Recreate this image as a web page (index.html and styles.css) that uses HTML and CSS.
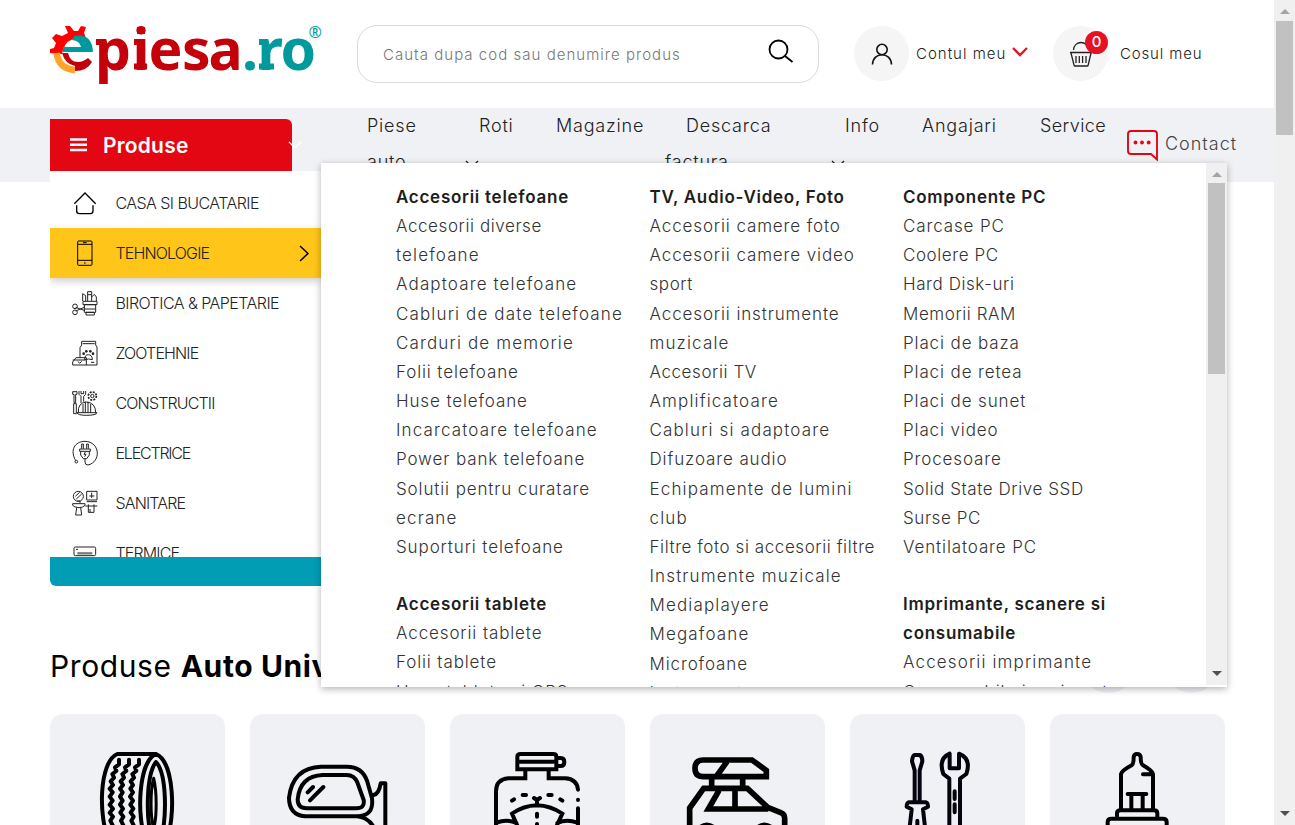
FILE: index.html
```html
<!DOCTYPE html>
<html lang="ro">
<head>
<meta charset="utf-8">
<title>epiesa.ro</title>
<link rel="stylesheet" href="styles.css">
</head>
<body>
<div class="page">
  <header class="header">
    <a class="logo">
      <svg width="276" height="64" viewBox="0 0 276 64">
        <g transform="translate(0 -5)">
        <path d="M0 33 0 29 4 28 6 23 2 18 6 14 12 16 18 13 15 6 20 6 24 11 28 11 31 6 36 7 34 13 36 18 30 19Q17 17 13 30L12 34Z" fill="#f00"/>
        <path d="M24 16Q42 13 43 32H13V27H31Q30 21 22 20Z" fill="#00999c"/>
        <path d="M12 33H18Q20 42 28 42Q33 42 38 38L42 42Q37 51 25 51V46Q15 44 12 33Z" fill="#c2000b"/>
        <path d="M6.500 33Q9 49 25 50" fill="none" stroke="#ffa326" stroke-width="6.500"/>
        </g>
        <g fill="#c4000b"><rect x="46" y="14" width="8" height="6"/><rect x="84" y="14" width="8" height="6"/><rect x="84" y="38.500" width="13" height="6"/><rect x="87" y="2" width="8" height="7"/></g>
        <g fill="#00999c"><rect x="209" y="14" width="8" height="6"/><rect x="209" y="38.500" width="15" height="6"/></g>
        <text class="logo-text" x="45 82.500 98.500 132 158.500" y="44.500" fill="#c4000b">piesa</text>
        <text class="logo-text" x="192 207.500 230.500" y="44.500" fill="#00999c">.ro</text>
        <text class="logo-reg" x="258.500" y="13" fill="#00999c">®</text>
      </svg>
    </a>
    <div class="search">
      <span>Cauta dupa cod sau denumire produs</span>
      <svg width="26" height="26" viewBox="0 0 26 26"><circle cx="10.500" cy="10.500" r="9" fill="none" stroke="#000" stroke-width="1.800"/><path d="M17 17L24.500 23" stroke="#000" stroke-width="1.800"/></svg>
    </div>
    <div class="account">
      <span class="round"><svg width="22" height="22" viewBox="0 0 22 22" fill="none" stroke="#111" stroke-width="1.600"><circle cx="11" cy="6.500" r="5.200"/><path d="M1.500 21.500C2 8.500 20 8.500 20.500 21.500"/></svg></span>
      <span class="account-text">Contul meu</span>
      <svg class="chev-red" width="16" height="10" viewBox="0 0 16 10"><path d="M1 1L8 8L15 1" fill="none" stroke="#e41326" stroke-width="2.300"/></svg>
    </div>
    <div class="cart">
      <span class="round"><svg width="24" height="26" viewBox="0 0 24 26" fill="none" stroke="#222" stroke-width="1.300"><path d="M4.500 9C5 -1 19 -1 19.500 9M1 11.500H23M2 12L5 24Q5.200 25 6 25H18Q19 25 19.200 24L22 12M7 15V22M10.300 15V22M13.600 15V22M17 15V22"/></svg><b class="badge">0</b></span>
      <span class="cart-text">Cosul meu</span>
    </div>
  </header>

  <nav class="nav">
    <div class="produse">
      <svg width="17" height="14" viewBox="0 0 17 14"><path d="M0 1.500H17M0 6.800H17M0 12H17" stroke="#fff" stroke-width="2.400"/></svg>
      <span>Produse</span>
      <svg class="produse-chev" width="14" height="8" viewBox="0 0 14 8"><path d="M1 1L7 7L13 1" fill="none" stroke="#fff" stroke-width="1.200"/></svg>
    </div>
    <div class="links">
      <a>Piese<br>auto</a>
      <a class="pad-a">Roti<svg class="link-chev" width="14" height="8" viewBox="0 0 14 8"><path d="M1 1L7 7L13 1" fill="none" stroke="#222" stroke-width="1.300"/></svg></a>
      <a>Magazine</a>
      <a><span class="pad-b">Descarca</span><br>factura</a>
      <a class="pad-a">Info<svg class="link-chev" width="14" height="8" viewBox="0 0 14 8"><path d="M1 1L7 7L13 1" fill="none" stroke="#222" stroke-width="1.300"/></svg></a>
      <a>Angajari</a>
      <a class="snug">Service</a>
    </div>
    <a class="contact">
      <svg width="31" height="31" viewBox="0 0 31 31"><path d="M4 1H27Q30 1 30 4V29.500L24 24H4Q1 24 1 21V4Q1 1 4 1Z" fill="none" stroke="#e30613" stroke-width="1.900"/><g fill="#e30613"><circle cx="8.500" cy="12.500" r="1.900"/><circle cx="15" cy="12.500" r="1.900"/><circle cx="21.700" cy="12.500" r="1.900"/></g></svg>
      <span>Contact</span>
    </a>
  </nav>

  <main class="content">
    <div class="section-head">
      <h2>Produse <b>Auto Universale</b></h2>
      <div class="arrows"><i></i><i></i></div>
    </div>
    <div class="cards">
      <div class="card"><svg viewBox="30 222 525 333" fill="none" stroke="#000" stroke-width="12" stroke-linecap="round">
        <path d="M348 342H232C176 365 175 535 207 600M348 342C294 365 289 535 318 600M348 342C404 365 407 535 379 600M348 366C319 402 316 535 337 600M348 366C381 402 381 535 362 600"/><path d="M341 415C330 455 331 530 341 565M341 415C351 455 351 530 341 565" stroke-width="9"/>
        <path d="M237 359V373L225 382 229 393 217 402 222 413 212 424 219 435 209 446 218 457 209 470 218 482 209 494 219 506 209 518 219 530 211 542 220 560M267 359V373L255 382 259 393 247 402 252 413 242 424 249 435 240 446 248 457 240 470 248 482 240 494 249 506 241 518 250 530 243 542 252 560M297 359V373L285 382 289 393 277 402 282 413 272 424 279 435 271 446 279 457 270 470 279 482 271 494 280 506 272 518 281 530 274 542 283 560" stroke-linejoin="round" stroke-width="12"/></svg></div>
      <div class="card"><svg viewBox="630 222 525 333" fill="none" stroke="#000" stroke-width="12" stroke-linecap="round" stroke-linejoin="round">
        <path d="M843 380H920Q968 380 982 425L996 475Q1002 529 951 529H795Q747 524 747 473Q758 383 843 380ZM848 405H920Q943 405 952 427L971 480Q975 505 949 505H800Q773 505 773 478Q780 408 848 405ZM803 457L819 441M810 481L850 441M999 466Q1017 463 1022 430H1036V570M951 529Q985 532 1002 563"/></svg></div>
      <div class="card"><svg viewBox="30 222 525 333" fill="none" stroke="#000" stroke-width="12" stroke-linecap="round">
        <path d="M232 388V350Q232 342 242 342H340Q349 342 349 350V388ZM236 365H349M349 354H362Q373 354 373 366Q373 378 362 378H351M256 390V415H205Q168 418 168 455V570M326 390V415H375Q411 417 414 449M414 479V480M414 505V570M291 496Q251 497 216 521L240 575M291 496Q331 497 367 521L342 575M291 496V479M282 474L291 480 300 474M216 482L222 478M248 465H258M325 465H335M361 478L367 482M291 521V530M291 552V570M170 548Q200 536 229 549M352 549Q380 536 412 548"/></svg></div>
      <div class="card"><svg viewBox="630 222 525 333" fill="none" stroke="#000" stroke-width="17">
        <path d="M789 360H936L979 391V410H790Q765 410 765 385Q765 360 789 360ZM861 365L830 408M815 415V442M908 415V442M749 570V504L791 445H922L983 502 1022 518Q1034 522 1034 535V570M837 451L805 507H985M885 447V506"/><path d="M780 562Q800 546 822 562M953 562Q973 546 995 562" stroke-width="13"/></svg></div>
      <div class="card"><svg viewBox="30 222 525 333" fill="none" stroke="#03040e" stroke-width="12" stroke-linecap="round" stroke-linejoin="round">
        <path d="M224 484V391L216 364Q218 345 224 345H240Q247 350 247 364L239 391V484M206 487H258Q264 489 264 500L249 508 256 570M206 487Q200 489 200 500L215 508 208 570M232 542V565M328 570V416L310 402Q294 356 329 341V385H357V341Q395 356 379 402L360 416V570M344 454V477M344 493V517"/></svg></div>
      <div class="card"><svg viewBox="630 222 525 333" fill="none" stroke="#000" stroke-width="12" stroke-linecap="round" stroke-linejoin="round">
        <path d="M843 507V402Q845 392 875 376Q881 372 881 351Q882 342 891 342Q901 342 902 351Q902 372 909 376Q937 392 939 402V507M909 403H933M863 462H919M874 465V507M908 465V507M831 529V520Q831 511 842 511H941Q952 511 952 520V529M803 570V546Q803 536 815 536H968Q980 536 980 546V570"/></svg></div>
    </div>
  </main>

  <aside class="sidebar">
    <ul>
      <li class="loose"><svg viewBox="95 256 78 78" fill="none" stroke="#000" stroke-width="4"><path d="M102 297L134 265L166 297M109 302V319Q109 327 118 327H150Q158 327 158 319V302"/></svg>CASA SI BUCATARIE</li>
      <li class="active"><svg viewBox="95 406 78 78" fill="none" stroke="#000" stroke-width="3"><rect x="112" y="409" width="43" height="73" rx="3"/><path d="M112 419H155M112 467H155M128 414H139M131 475H136" /></svg><span>TEHNOLOGIE</span><svg class="right" width="10" height="17" viewBox="0 0 10 17"><path d="M1 1L9 8.500L1 16" fill="none" stroke="#000" stroke-width="1.500"/></svg></li>
      <li class="loose"><svg viewBox="95 31 78 78" fill="none" stroke="#222" stroke-width="3"><path d="M128 65H170V75H128ZM132 75H166V98H132ZM137 98H162V106H137ZM127 64V42L136 48V64M142 64V36H154V64M154 52L162 44 168 52V64M142 45H153M134 82L106 94M134 93L106 83M133 88H165"/><circle cx="104" cy="80" r="7"/><circle cx="104" cy="98" r="7"/></svg>BIROTICA &amp; PAPETARIE</li>
      <li><svg viewBox="95 181 78 78" fill="none" stroke="#222" stroke-width="3"><path d="M124 185H166V196L170 202V256H97V247L107 234H138V256M124 185V196L119 204V234M127 192H163M97 241H136M113 245L118 251 124 245M152 248H162"/><path d="M133 240Q133 225 144 225Q156 226 156 240L145 238Z"/><g fill="#222" stroke="none"><circle cx="130" cy="222" r="4"/><circle cx="138" cy="215" r="4"/><circle cx="150" cy="215" r="4"/><circle cx="158" cy="222" r="4"/></g></svg>ZOOTEHNIE</li>
      <li><svg viewBox="95 331 78 78" fill="none" stroke="#222" stroke-width="3"><path d="M97 336H110V344H106V369H101V344H97ZM100 372H108V402H100ZM116 334V344L122 350V370M130 350V366M122 334V342H130V334M136 334V344L130 350M114 399Q112 369 138 367Q166 369 166 399M110 399H170Q168 407 138 407Q112 407 110 399M128 373V399M135 366V399M143 366V399M151 373V399"/><circle cx="156" cy="349" r="5"/><circle cx="156" cy="349" r="12" stroke-dasharray="6 3.400" stroke-width="5"/></svg>CONSTRUCTII</li>
      <li class="snug"><svg viewBox="95 481 78 78" fill="none" stroke="#222" stroke-width="3"><path d="M106 543C88 512 103 485 134 485C180 486 183 547 143 556Q134 556 134 547V537M124 507V493H129V507M139 507V493H144V507M118 508H150V515H118ZM121 515V526L129 537H139L147 526V515M135 517L131 524H137L133 531"/><circle cx="108" cy="546" r="4"/></svg>ELECTRICE</li>
      <li><svg viewBox="95 631 78 78" fill="none" stroke="#222" stroke-width="3"><circle cx="114" cy="650" r="15"/><path d="M105 650L118 638M108 658L124 643M139 635H170V661H139ZM154 639V655M147 649H162M139 666H170M97 672H134V677Q128 684 116 684Q101 683 97 677ZM109 684L106 706H124L121 684M110 664H119V671M135 679H171M144 674V698H161V674M149 688V698"/></svg>SANITARE</li>
      <li><svg viewBox="95 781 78 78" fill="none" stroke="#222" stroke-width="3"><rect x="101" y="802" width="65" height="26" rx="4"/><path d="M107 809H113"/><path d="M111 821H156" stroke="#777" stroke-width="7"/></svg>TERMICE</li>
    </ul>
    <div class="side-foot"></div>
  </aside>

  <section class="mega">
    <div class="mega-body">
      <div class="col">
        <h3>Accesorii telefoane</h3>
        <p class="t">Accesorii diverse</p><p class="w">telefoane</p><p class="w">Adaptoare telefoane</p><p class="w">Cabluri de date telefoane</p><p class="w">Carduri de memorie</p><p>Folii telefoane</p><p>Huse telefoane</p><p class="w">Incarcatoare telefoane</p><p>Power bank telefoane</p><p>Solutii pentru curatare</p><p class="w">ecrane</p><p>Suporturi telefoane</p>
        <h3 class="next">Accesorii tablete</h3>
        <p>Accesorii tablete</p><p>Folii tablete</p><p>Huse tablete si GPS</p>
      </div>
      <div class="col">
        <h3>TV, Audio-Video, Foto</h3>
        <p>Accesorii camere foto</p><p>Accesorii camere video</p><p class="t">sport</p><p>Accesorii instrumente</p><p class="w">muzicale</p><p class="t">Accesorii TV</p><p class="w">Amplificatoare</p><p class="w">Cabluri si adaptoare</p><p>Difuzoare audio</p><p class="w">Echipamente de lumini</p><p class="w">club</p><p class="t">Filtre foto si accesorii filtre</p><p class="w">Instrumente muzicale</p><p class="w">Mediaplayere</p><p class="w">Megafoane</p><p>Microfoane</p><p>Instrumente</p>
      </div>
      <div class="col">
        <h3>Componente PC</h3>
        <p>Carcase PC</p><p class="t">Coolere PC</p><p class="t">Hard Disk-uri</p><p class="t">Memorii RAM</p><p>Placi de baza</p><p>Placi de retea</p><p>Placi de sunet</p><p>Placi video</p><p>Procesoare</p><p class="t">Solid State Drive SSD</p><p class="t">Surse PC</p><p>Ventilatoare PC</p>
        <h3 class="next">Imprimante, scanere si<br>consumabile</h3>
        <p class="w">Accesorii imprimante</p><p>Consumabile imprimanta</p>
      </div>
    </div>
    <div class="bar bar-inner"><i class="up"></i><i class="thumb"></i><i class="down"></i></div>
  </section>
</div>
<div class="bar"><i class="up"></i><i class="thumb"></i><i class="down"></i></div>
</body>
</html>
```
FILE: styles.css
```css
* { box-sizing: border-box; }
body { margin: 0; height: 825px; display: flex; overflow: hidden; background: #fff; font-family: Inter, "Open Sans", sans-serif; font-weight: 300; color: #222; }
h2, h3, p, ul { margin: 0; padding: 0; }
svg { flex: none; display: block; }
.page { position: relative; width: 1274px; height: 825px; overflow: hidden; }

.header { height: 108px; padding: 25px 0 0 50px; display: flex; align-items: flex-start; }
.logo { width: 307px; height: 64px; }
.logo svg { overflow: visible; }
.logo-text { font: 700 57px "Noto Sans", sans-serif; }
.logo-reg { font: 400 16px "Noto Sans", sans-serif; }
.search { width: 462px; height: 58px; border: 1px solid #d9d9d9; border-radius: 20px; padding: 0 24px 4px 25px; display: flex; align-items: center; justify-content: space-between; font-size: 15px; letter-spacing: 1.03px; color: #777; }
.search span { padding-top: 4px; }
.account, .cart { display: flex; align-items: center; height: 55px; margin-top: 1px; font-size: 15px; letter-spacing: .85px; white-space: nowrap; }
.account { width: 199px; margin-left: 35px; letter-spacing: 1px; }
.round { position: relative; flex: none; width: 55px; height: 55px; border-radius: 50%; background: #f5f5f5; display: flex; align-items: center; justify-content: center; }
.account-text { width: 96px; margin-left: 7px; }
.chev-red { margin-bottom: 3px; }
.cart-text { margin-left: 12px; }
.badge { position: absolute; left: 32px; top: 5px; width: 23px; height: 23px; border-radius: 50%; background: #e81123; color: #fff; font: 500 15px/22px Inter, sans-serif; letter-spacing: 0; text-align: center; }

.nav { height: 74px; background: #f0f1f5; padding-left: 50px; display: flex; }
.produse { width: 242px; height: 52px; margin-top: 11px; background: #e30613; border-top-right-radius: 6px; display: flex; align-items: center; padding-left: 20px; gap: 16px; color: #fff; font-size: 21px; font-weight: 600; letter-spacing: .2px; position: relative; }
.produse-chev { position: absolute; right: -10px; top: 22px; }
.links { margin-left: 75px; display: grid; grid-template-columns: 98px 91px 109px 166px 91px 118px 87px; font-size: 18px; line-height: 36px; letter-spacing: .8px; height: 74px; overflow: hidden; white-space: nowrap; }
.links .snug { letter-spacing: .4px; }
.pad-a { padding-left: 14px; }
.pad-b { padding-left: 21px; }
.link-chev { margin: 16px 0 0 -14px; }
.contact { display: flex; gap: 7px; padding-top: 22px; font-size: 18px; line-height: 28px; letter-spacing: 1px; color: #444; }

.content { padding-left: 50px; }
.section-head { margin-top: 456px; height: 55px; width: 1169px; display: flex; align-items: center; justify-content: space-between; }
h2 { font-size: 30px; font-weight: 400; letter-spacing: .6px; color: #000; white-space: nowrap; }
h2 b { font-weight: 700; }
.arrows { display: flex; gap: 28px; }
.arrows i { width: 55px; height: 55px; border-radius: 50%; background: #f0f1f5; }
.cards { margin-top: 21px; display: flex; gap: 25px; }
.card { width: 175px; height: 130px; border-radius: 13px; background: #f0f1f5; }
.card svg { width: 175px; height: 111px; }

.sidebar { position: absolute; left: 50px; top: 171px; width: 271px; background: #fff; border-radius: 0 0 0 6px; }
.sidebar ul { height: 386px; padding-top: 7px; overflow: hidden; list-style: none; }
.sidebar li { height: 50px; padding: 0 12px 0 21.5px; display: flex; align-items: center; gap: 18px; font-size: 16px; letter-spacing: -.85px; white-space: nowrap; }
.sidebar li.loose { letter-spacing: -.55px; }
.sidebar li.snug { letter-spacing: -1.2px; }
.sidebar li > svg:first-child { width: 26px; height: 26px; }
.sidebar li.active { background: #ffc519; box-shadow: 0 3px 8px rgba(0,0,0,.2); }
.sidebar .right { margin-left: auto; }
.side-foot { height: 29px; background: #009db5; border-radius: 0 0 0 6px; }

.mega { position: absolute; left: 321px; top: 163px; width: 906px; height: 524px; background: #fff; display: flex; box-shadow: 0 2px 7px rgba(0,0,0,.3); overflow: hidden; }
.mega-body { flex: 1; padding: 20px 0 0 75px; display: grid; grid-template-columns: 253.5px 253.5px 1fr; font-size: 17px; line-height: 29.16px; letter-spacing: .88px; color: #333; white-space: nowrap; }
.mega .w { letter-spacing: 1.14px; }
.mega .t { letter-spacing: .58px; }
.mega h3 { font-size: 17px; font-weight: 600; letter-spacing: .73px; color: #1d1d1d; }
.mega .next { margin-top: 28px; }

.bar { position: relative; width: 21px; height: 825px; background: #f0f0f0; flex: none; padding: 21px 2px 0; }
.bar i { display: block; }
.bar .up, .bar .down { position: absolute; left: 6px; border: 5px solid transparent; }
.bar .up { top: 9px; border-top: 0; border-bottom-color: #a3a3a3; }
.bar .down { bottom: 9px; border-bottom: 0; border-top-color: #505050; }
.thumb { height: 114px; background: #c1c1c1; }
.bar-inner { height: 522px; padding-top: 20px; }
.bar-inner .thumb { height: 191px; }
```
